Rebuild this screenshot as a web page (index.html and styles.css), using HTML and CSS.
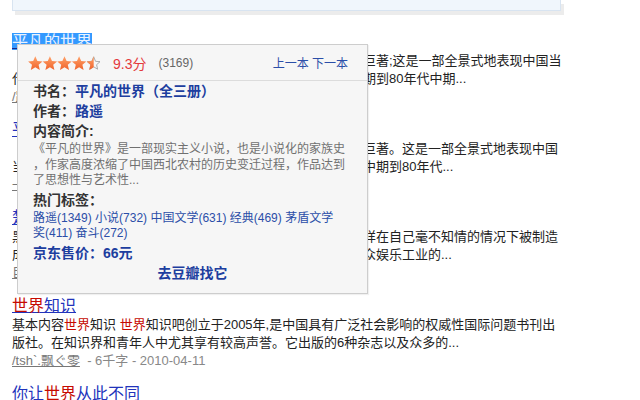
FILE: index.html
```html
<!DOCTYPE html>
<html lang="zh">
<head>
<meta charset="utf-8">
<link rel="stylesheet" href="styles.css">
</head>
<body>
<div class="topbar"></div>
<div class="results">
  <div class="result">
    <div class="title"><a class="link sel">平凡的世界</a></div>
    <div class="desc">《平凡的世界》是中国著名作家路遥创作的一部百万字的长篇巨著;这是一部全景式地表现中国当<br>代城乡社会生活的长篇小说，全书共三部，时间从七十年代中期到80年代中期...</div>
    <div class="meta"><a class="author">/路遥</a> - 5千字 - 2010-03-02</div>
  </div>
  <div class="result">
    <div class="title"><a class="link">平凡的世界(路遥著)</a></div>
    <div class="desc">《平凡的世界》是中国著名作家路遥创作的一部百万字的长篇巨著。这是一部全景式地表现中国<br>当代城乡社会生活的长篇小说，全书共三部，时间从七十年代中期到80年代...</div>
    <div class="meta"><a class="author">一叶知秋</a> - 3千字 - 2010-02-18</div>
  </div>
  <div class="result">
    <div class="title"><a class="link">楚门的世界</a></div>
    <div class="desc">黑色幽默电影《楚门的世界》讲述了主人公楚门一生像商品一样在自己毫不知情的情况下被制造<br>成为一档全天候真人秀节目的主角，他的一举一动都成为了大众娱乐工业的...</div>
    <div class="meta"><a class="author">巨星影评</a> - 4千字 - 2009-11-20</div>
  </div>
  <div class="result">
    <div class="title"><a class="link"><em>世界</em>知识</a></div>
    <div class="desc">基本内容<em>世界</em>知识 <em>世界</em>知识吧创立于2005年,是中国具有广泛社会影响的权威性国际问题书刊出<br>版社。在知识界和青年人中尤其享有较高声誉。它出版的6种杂志以及众多的...</div>
    <div class="meta"><a class="author">/tsh`.飘ぐ零</a>&nbsp; - 6千字 - 2010-04-11</div>
  </div>
  <div class="result">
    <div class="title"><a class="link">你让<em>世界</em>从此不同</a></div>
  </div>
</div>

<div class="popup">
  <div class="pop-head">
    <div class="stars">
      <svg width="74" height="15" viewBox="0 0 74 15">
        <defs>
          <linearGradient id="g" x1="0" y1="0" x2="0" y2="1">
            <stop offset="0" stop-color="#ffa36a"/>
            <stop offset="1" stop-color="#f0622a"/>
          </linearGradient>
          <clipPath id="half"><rect x="0" y="0" width="7.3" height="15"/></clipPath>
          <polygon id="st" points="7.3,0.2 9.4,5 14.5,5.4 10.6,8.8 11.8,14 7.3,11.2 2.8,14 4,8.8 0.1,5.4 5.2,5"/>
        </defs>
        <g fill="url(#g)">
          <use href="#st"/>
          <use href="#st" x="14.6"/>
          <use href="#st" x="29.2"/>
          <use href="#st" x="43.8"/>
        </g>
        <g transform="translate(58.4 0)">
          <polygon points="7.3,0.8 9.1,5.3 13.6,5.7 10.2,8.7 11.2,13.2 7.3,10.8 3.4,13.2 4.4,8.7 1,5.7 5.5,5.3" fill="none" stroke="#999" stroke-width="0.8"/>
          <use href="#st" fill="url(#g)" clip-path="url(#half)"/>
        </g>
      </svg>
    </div>
    <span class="score">9.3分</span>
    <span class="count">(3169)</span>
    <span class="nav"><a>上一本</a> <a>下一本</a></span>
  </div>
  <div class="pop-body">
    <div class="row"><b class="label">书名：</b><b class="val">平凡的世界（全三册）</b></div>
    <div class="row"><b class="label">作者：</b><b class="val">路遥</b></div>
    <div class="row"><b class="label">内容简介:</b></div>
    <div class="intro">《平凡的世界》是一部现实主义小说，也是小说化的家族史<br>，作家高度浓缩了中国西北农村的历史变迁过程，作品达到<br>了思想性与艺术性...</div>
    <div class="row"><b class="label">热门标签：</b></div>
    <div class="tags"><a>路遥(1349)</a> <a>小说(732)</a> <a>中国文学(631)</a> <a>经典(469)</a> <a>茅盾文学<br>奖(411)</a> <a>奋斗(272)</a></div>
    <div class="price">京东售价：66元</div>
    <div class="douban"><a>去豆瓣找它</a></div>
  </div>
</div>
</body>
</html>
```

FILE: styles.css
```css
html, body {
  margin: 0;
  padding: 0;
  background: #fff;
}
body {
  position: relative;
  width: 640px;
  height: 400px;
  overflow: hidden;
  font-family: "Liberation Sans", "Noto Sans CJK SC", sans-serif;
  color: #222;
}
a { text-decoration: none; cursor: pointer; }
em { font-style: normal; color: #c60a00; }

.topbar {
  margin-left: 12px;
  width: 547px;
  height: 10px;
  background: #f0f6fc;
  border: 1px solid #d8e4f1;
  border-top: none;
  box-shadow: 3px 4px 0 #ececec;
}

.results {
  margin-top: 21px;
  padding-left: 12px;
}
.result {
  margin-bottom: 14px;
}
.title {
  font-size: 16px;
  line-height: 20px;
  white-space: nowrap;
}
.link {
  color: #2233bb;
  text-decoration: underline;
}
.sel {
  background: #3399ff;
  color: #eaf3ff;
  text-decoration-color: #1a2a88;
}
.desc {
  font-size: 13px;
  line-height: 18px;
  color: #222;
  white-space: nowrap;
}
.meta {
  font-size: 13px;
  line-height: 18px;
  color: #888;
  white-space: nowrap;
}
.author {
  color: #777;
  text-decoration: underline;
}

.popup {
  position: absolute;
  left: 17px;
  top: 44px;
  width: 349px;
  height: 248px;
  background: #f6f6f6;
  border: 1px solid #cdcdcd;
  box-shadow: 1px 1px 1px rgba(0,0,0,0.06);
}
.pop-head {
  display: flex;
  align-items: center;
  height: 35px;
  padding-left: 10px;
  border-bottom: 1px solid #dcdcdc;
}
.stars {
  display: flex;
  width: 74px;
  height: 15px;
  margin-top: 1px;
}
.score {
  margin-left: 11px;
  font-size: 14px;
  color: #e4393c;
}
.count {
  margin-left: 12px;
  font-size: 12px;
  color: #666;
}
.nav {
  margin-left: auto;
  margin-right: 19px;
  font-size: 12px;
  color: #2b4ea8;
}
.nav a { color: #2b4ea8; }

.pop-body {
  padding-left: 15px;
}
.row {
  font-size: 14px;
  line-height: 20px;
  white-space: nowrap;
}
.label { color: #333; }
.val { color: #1d3e9f; }
.intro {
  margin-top: 1px;
  font-size: 12px;
  line-height: 15.5px;
  color: #707070;
  white-space: nowrap;
  margin-bottom: 1.5px;
}
.tags {
  margin-top: 1px;
  font-size: 12px;
  line-height: 15px;
  white-space: nowrap;
}
.tags a { color: #2b4ea8; }
.price {
  margin-top: 1px;
  font-size: 14px;
  line-height: 22px;
  font-weight: bold;
  color: #1d3e9f;
}
.douban {
  text-align: center;
  font-size: 14px;
  line-height: 20px;
  font-weight: bold;
  margin-left: -15px;
  margin-top: -1px;
}
.douban a { color: #1d3e9f; }
```
